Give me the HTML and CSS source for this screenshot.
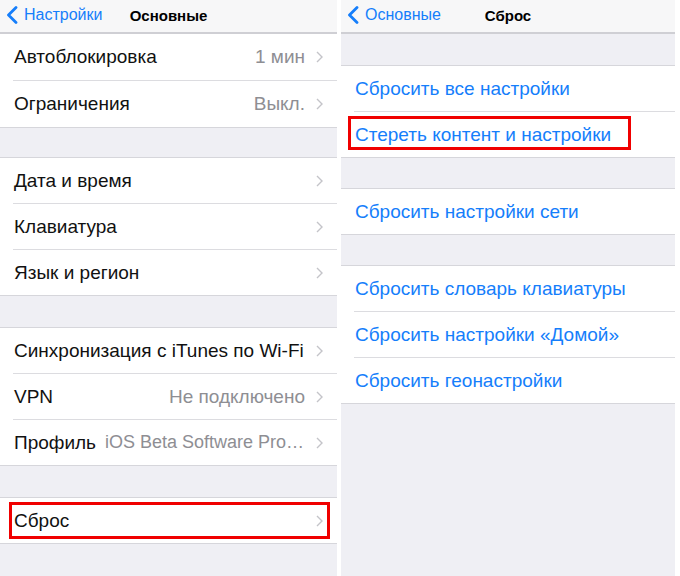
FILE: index.html
```html
<!DOCTYPE html>
<html lang="ru">
<head>
<meta charset="utf-8">
<link rel="stylesheet" href="styles.css">
</head>
<body>
<div class="screen">
  <section class="panel panel-left">
    <header class="nav">
      <div class="back">
        <svg class="back-icon" viewBox="0 0 12 18" width="12" height="18"><polyline points="10,1.5 2.5,9 10,16.5" fill="none" stroke="#157efb" stroke-width="2.8" stroke-linecap="round" stroke-linejoin="round"/></svg>
        <span>Настройки</span>
      </div>
      <div class="title">Основные</div>
    </header>
    <div class="group group-first">
      <div class="row"><span class="label">Автоблокировка</span><span class="value">1 мин</span><svg class="chev" viewBox="0 0 7 12" width="7" height="12"><polyline points="1,1 6,6 1,11" fill="none" stroke="#c4c4c9" stroke-width="1.4"/></svg></div>
      <div class="row"><span class="label">Ограничения</span><span class="value">Выкл.</span><svg class="chev" viewBox="0 0 7 12" width="7" height="12"><polyline points="1,1 6,6 1,11" fill="none" stroke="#c4c4c9" stroke-width="1.4"/></svg></div>
    </div>
    <div class="group">
      <div class="row"><span class="label">Дата и время</span><svg class="chev" viewBox="0 0 7 12" width="7" height="12"><polyline points="1,1 6,6 1,11" fill="none" stroke="#c4c4c9" stroke-width="1.4"/></svg></div>
      <div class="row"><span class="label">Клавиатура</span><svg class="chev" viewBox="0 0 7 12" width="7" height="12"><polyline points="1,1 6,6 1,11" fill="none" stroke="#c4c4c9" stroke-width="1.4"/></svg></div>
      <div class="row"><span class="label">Язык и регион</span><svg class="chev" viewBox="0 0 7 12" width="7" height="12"><polyline points="1,1 6,6 1,11" fill="none" stroke="#c4c4c9" stroke-width="1.4"/></svg></div>
    </div>
    <div class="group">
      <div class="row"><span class="label">Синхронизация с iTunes по Wi-Fi</span><svg class="chev" viewBox="0 0 7 12" width="7" height="12"><polyline points="1,1 6,6 1,11" fill="none" stroke="#c4c4c9" stroke-width="1.4"/></svg></div>
      <div class="row"><span class="label">VPN</span><span class="value">Не подключено</span><svg class="chev" viewBox="0 0 7 12" width="7" height="12"><polyline points="1,1 6,6 1,11" fill="none" stroke="#c4c4c9" stroke-width="1.4"/></svg></div>
      <div class="row"><span class="label">Профиль</span><span class="value value-small">iOS Beta Software Pro…</span><svg class="chev" viewBox="0 0 7 12" width="7" height="12"><polyline points="1,1 6,6 1,11" fill="none" stroke="#c4c4c9" stroke-width="1.4"/></svg></div>
    </div>
    <div class="group">
      <div class="row marked marked-left"><span class="label">Сброс</span><svg class="chev" viewBox="0 0 7 12" width="7" height="12"><polyline points="1,1 6,6 1,11" fill="none" stroke="#c4c4c9" stroke-width="1.4"/></svg></div>
    </div>
  </section>

  <section class="panel panel-right">
    <header class="nav">
      <div class="back">
        <svg class="back-icon" viewBox="0 0 12 18" width="12" height="18"><polyline points="10,1.5 2.5,9 10,16.5" fill="none" stroke="#157efb" stroke-width="2.8" stroke-linecap="round" stroke-linejoin="round"/></svg>
        <span>Основные</span>
      </div>
      <div class="title">Сброс</div>
    </header>
    <div class="group">
      <div class="row action">Сбросить все настройки</div>
      <div class="row action marked marked-right">Стереть контент и настройки</div>
    </div>
    <div class="group">
      <div class="row action">Сбросить настройки сети</div>
    </div>
    <div class="group">
      <div class="row action">Сбросить словарь клавиатуры</div>
      <div class="row action">Сбросить настройки «Домой»</div>
      <div class="row action">Сбросить геонастройки</div>
    </div>
  </section>
</div>
</body>
</html>
```

FILE: styles.css
```css
html, body {
  margin: 0;
  padding: 0;
  background: #ffffff;
}

body {
  font-family: "Liberation Sans", Arial, sans-serif;
  width: 680px;
  height: 576px;
  overflow: hidden;
}

.screen {
  display: flex;
  gap: 4px;
  height: 576px;
}

.panel {
  background: #efeff4;
  height: 576px;
  overflow: hidden;
}

.panel-left {
  width: 337px;
}

.panel-right {
  width: 334px;
}

.nav {
  position: relative;
  height: 30px;
  padding-bottom: 2px;
  background: #f7f7f8;
  border-bottom: 2px solid #cfcfd4;
  display: flex;
  align-items: center;
  justify-content: center;
}

.back {
  position: absolute;
  left: 6px;
  top: 0;
  height: 30px;
  display: flex;
  align-items: center;
  gap: 6px;
  color: #157efb;
  font-size: 16px;
}

.title {
  font-size: 15px;
  font-weight: bold;
  color: #000;
}

.group {
  background: #ffffff;
  border-top: 1px solid #d6d6db;
  border-bottom: 1px solid #d6d6db;
  margin-top: 31px;
}

.group-first {
  margin-top: 0;
  border-top: none;
}

.group-first + .group {
  margin-top: 29px;
}

.panel-right .group + .group {
  margin-top: 30px;
}

.row {
  position: relative;
  height: 45px;
  display: flex;
  align-items: center;
  padding: 0 14px;
  font-size: 19px;
  color: #111;
  white-space: nowrap;
}

.group-first .row {
  height: 46px;
}

.row + .row {
  border-top: 1px solid transparent;
}

.row + .row::before {
  content: "";
  position: absolute;
  left: 13px;
  right: 0;
  top: -1px;
  border-top: 1px solid #dcdce0;
}

.label {
  flex: 0 0 auto;
}

.value {
  margin-left: auto;
  color: #8e8e93;
  padding-right: 11px;
}

.value-small {
  font-size: 18px;
  padding-right: 12px;
}

.chev {
  margin-left: auto;
  flex: 0 0 auto;
}

.value + .chev {
  margin-left: 0;
}

.action {
  color: #157efb;
}

.marked::after {
  content: "";
  position: absolute;
  border: 3px solid #f00000;
  box-sizing: border-box;
}

.marked-left::after {
  left: 9px;
  right: 7px;
  top: 4px;
  bottom: 4px;
}

.marked-right::after {
  left: 7px;
  width: 283px;
  top: 4px;
  height: 34px;
}
```
